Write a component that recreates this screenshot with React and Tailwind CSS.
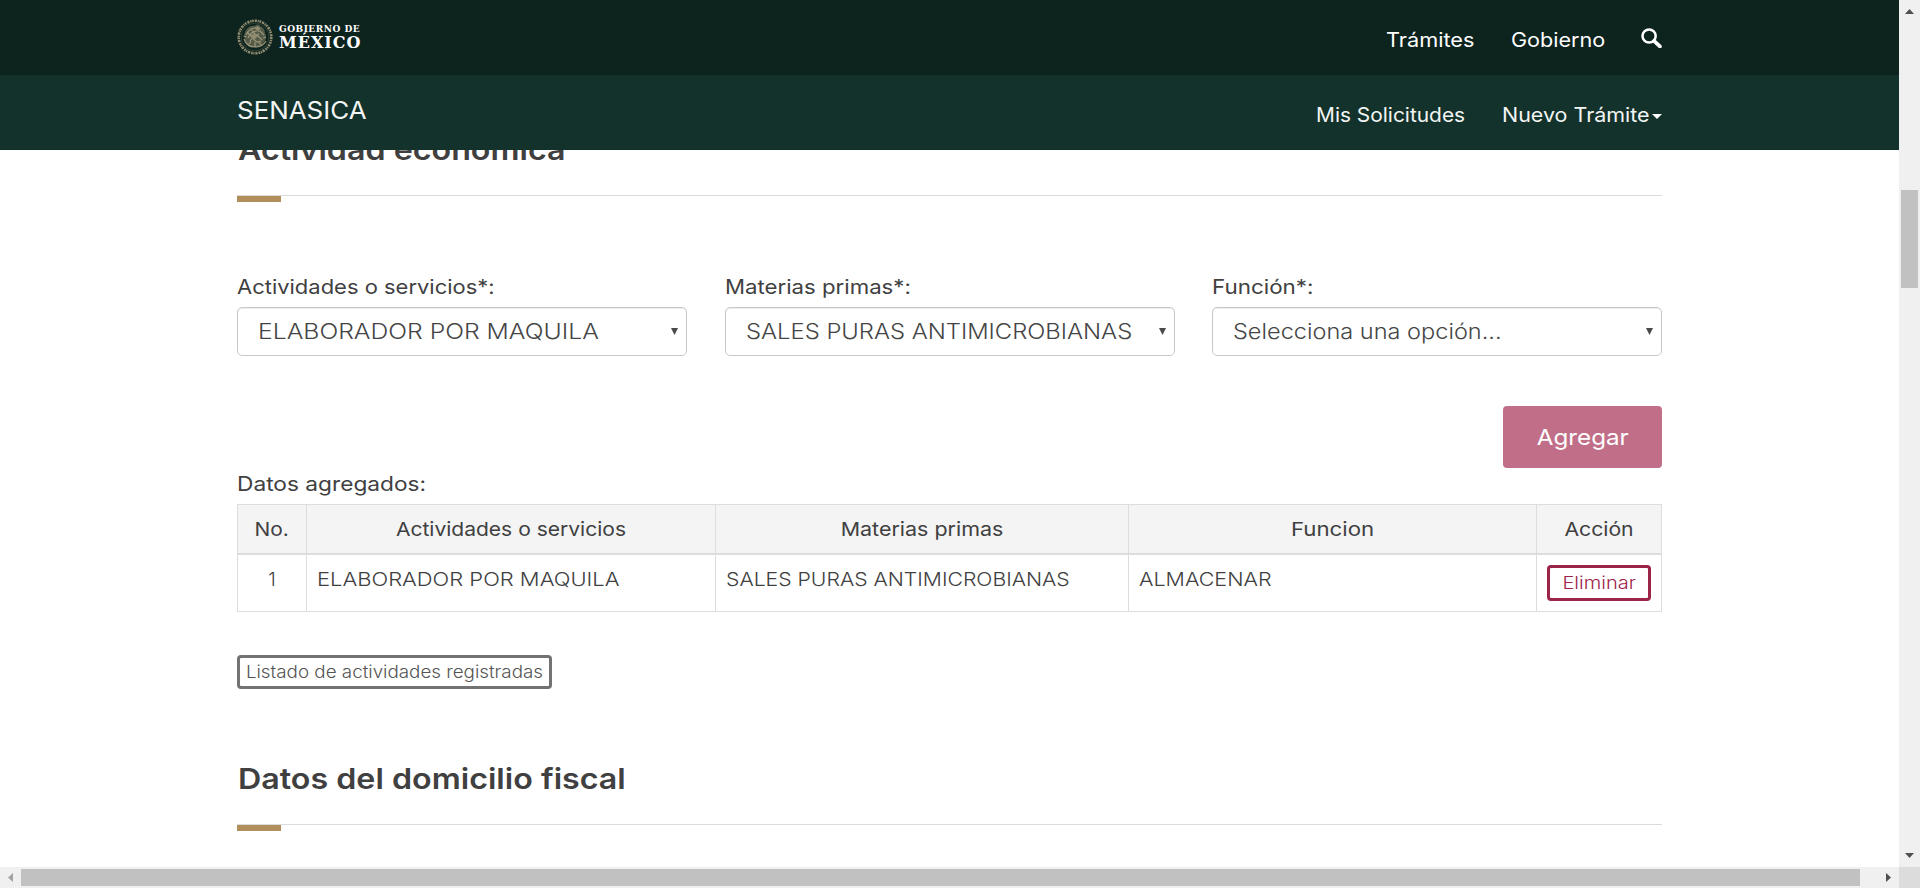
import React from 'react';

function Seal() {
  return (
    <svg className="h-9 w-9 shrink-0" viewBox="0 0 36 36" fill="none">
      <circle cx="18" cy="18" r="16.3" stroke="#8f8b70" strokeWidth="2.6" strokeDasharray="2.3 0.8 1.2 0.6 1.7 1" />
      <circle cx="18" cy="18" r="13.9" stroke="#3c4738" strokeWidth="0.8" />
      <path
        d="M8 13c2-5 6-7 10-6 1-2 4-2 5 0 3 1 5 4 5 7 2 3 1 7-1 9-2 4-6 6-10 5-4 0-8-3-9-7-1-3-1-5 0-8z"
        fill="#535a48"
      />
      <path
        d="M9 16c2-4 5-7 9-7M11 19c2-4 5-7 9-7M13 22c2-4 5-6 9-7M10 13l4 4M14 10l4 5M19 8l3 5M20 16l5 5M23 12l4 4M16 20l4 3 4-1M7 20c2 6 6 8 11 8s9-2 11-6M12 25l2-3M18 28v-5M24 26l-2-3M6.5 17l3 1M29 18l-3 1"
        stroke="#9b9678"
        strokeWidth="1.2"
      />
      <path d="M17 9l4-2 3 3-3 2zM13 17l5-3 3 3-4 4z" fill="#8f8b70" />
    </svg>
  );
}

function SearchIcon() {
  return (
    <svg className="-mt-[3px] h-5 w-[21px]" viewBox="0 0 21 20" fill="none" stroke="#fff">
      <circle cx="8.1" cy="8" r="6.6" strokeWidth="2.5" />
      <path d="M13 12.9l5.9 5.5" strokeWidth="3.7" strokeLinecap="round" />
    </svg>
  );
}

function Wide({ children, className }) {
  return <span className={`inline-block whitespace-nowrap ${className}`}>{children}</span>;
}

function Heading({ children }) {
  return (
    <div className="h-[83px]">
      <div className="flex h-[68px] items-center justify-start border-b border-[#d9dcdc]">
        <h3 className="-mt-[23px] pl-px text-[29px] leading-[40px] font-[560]">
          <Wide className="origin-left scale-x-[1.111]">{children}</Wide>
        </h3>
      </div>
      <div className="h-1.5 w-11 bg-[#b38e5d]" />
    </div>
  );
}

function Field({ label, labelClass, value, valueClass }) {
  return (
    <div className="w-[450px]">
      <div className="h-[32px] text-[20px] leading-[24px]">
        <Wide className={`origin-left ${labelClass}`}>{label}</Wide>
      </div>
      <div className="flex h-[49px] items-center justify-between rounded-[5px] border border-[#c8c8c8] bg-white pr-[8px] pl-5 shadow-[inset_0_1px_1px_rgba(0,0,0,0.075)]">
        <span className="-mt-[2px] text-[21.5px] leading-[30px] font-light text-[#454545]">
          <Wide className={`origin-left ${valueClass}`}>{value}</Wide>
        </span>
        <svg className="h-[7px] w-[7px]" viewBox="0 0 7 7">
          <path d="M0 0h7L3.5 7z" fill="#4a4a4a" />
        </svg>
      </div>
    </div>
  );
}

const columns = [
  { title: 'No.', className: 'scale-x-[1.1]' },
  { title: 'Actividades o servicios', className: 'scale-x-[1.107]' },
  { title: 'Materias primas', className: 'scale-x-[1.13]' },
  { title: 'Funcion', className: 'scale-x-[1.17]' },
  { title: 'Acción', className: 'scale-x-[1.115]' },
];

function DataTable() {
  return (
    <div className="grid h-[108px] grid-cols-[69px_409px_413px_408px_125px] grid-rows-[50px_57px] border-t border-l border-[#dddddd] text-[19px]">
      {columns.map((c) => (
        <div key={c.title} className="flex items-center justify-center border-r border-b-2 border-[#dddddd] bg-[#f4f4f4] pt-[2px]">
          <Wide className={c.className}>{c.title}</Wide>
        </div>
      ))}
      <div className="border-r border-b border-[#dddddd] pt-[13px] text-center leading-[24px] font-light">1</div>
      <div className="border-r border-b border-[#dddddd] pt-[13px] pl-[10px] leading-[24px] font-light">
        <Wide className="origin-left scale-x-[1.155]">ELABORADOR POR MAQUILA</Wide>
      </div>
      <div className="border-r border-b border-[#dddddd] pt-[13px] pl-[10px] leading-[24px] font-light">
        <Wide className="origin-left scale-x-[1.115]">SALES PURAS ANTIMICROBIANAS</Wide>
      </div>
      <div className="border-r border-b border-[#dddddd] pt-[13px] pl-[10px] leading-[24px] font-light">
        <Wide className="origin-left scale-x-[1.13]">ALMACENAR</Wide>
      </div>
      <div className="border-r border-b border-[#dddddd] pt-[10px] pl-[10px]">
        <button className="flex h-9 w-[104px] items-center justify-center rounded-[4px] border-3 border-[#9d2449] pt-[2px] text-[17px] font-light text-[#9d2449]">
          <Wide className="scale-x-[1.18]">Eliminar</Wide>
        </button>
      </div>
    </div>
  );
}

export default function App() {
  return (
    <div className="flex h-[888px] w-[1920px] flex-col overflow-hidden bg-white font-['Inter',sans-serif] text-[#404041]">
      <div className="flex h-[867px]">
        <div className="flex w-[1899px] flex-col overflow-hidden">
          <header className="z-10 shrink-0 text-white">
            <div className="flex h-[75px] justify-between bg-[#0c231e] pr-[237px] pl-[237px]">
              <div className="flex h-[73px] items-center gap-[6px]">
                <Seal />
                <div className="flex flex-col pt-[2px] font-['DejaVu_Serif',serif] font-bold">
                  <span className="h-[10px] text-[9px] leading-[10px] tracking-[0.5px] whitespace-nowrap">GOBIERNO DE</span>
                  <span className="h-[17px] text-[16px] leading-[17px] tracking-[1px]">MÉXICO</span>
                </div>
              </div>
              <nav className="flex items-center pt-1 text-[20px]">
                <a className="w-[125px]"><Wide className="origin-left scale-x-[1.085]">Trámites</Wide></a>
                <a className="w-[130px]"><Wide className="origin-left scale-x-[1.08]">Gobierno</Wide></a>
                <SearchIcon />
              </nav>
            </div>
            <div className="flex h-[75px] justify-between bg-[#13322b] pr-[237px] pl-[237px] text-[#f3f5f4]">
              <div className="pt-[21px] text-[24px] leading-[30px]">
                <Wide className="origin-left scale-x-[1.08]">SENASICA</Wide>
              </div>
              <nav className="flex items-center pt-1 text-[20px]">
                <a className="w-[186px]"><Wide className="origin-left scale-x-[1.045]">Mis Solicitudes</Wide></a>
                <a className="w-[150px]"><Wide className="origin-left scale-x-[1.073]">Nuevo Trámite</Wide></a>
                <svg className="mt-1 h-[5px] w-[10px]" viewBox="0 0 10 5">
                  <path d="M0 0h10L5 5z" fill="#fff" />
                </svg>
              </nav>
            </div>
          </header>

          <main className="-mt-[22px] w-[1662px] pl-[237px]">
            <Heading>Actividad económica</Heading>

            <section className="flex justify-between pt-[64px]">
              <Field label="Actividades o servicios*:" labelClass="scale-x-[1.098]" value="ELABORADOR POR MAQUILA" valueClass="scale-x-[1.15]" />
              <Field label="Materias primas*:" labelClass="scale-x-[1.11]" value="SALES PURAS ANTIMICROBIANAS" valueClass="scale-x-[1.107]" />
              <Field label="Función*:" labelClass="scale-x-[1.12]" value="Selecciona una opción..." valueClass="scale-x-[1.095]" />
            </section>

            <div className="flex justify-end pt-[50px]">
              <button className="h-[62px] w-[159px] rounded-[4px] bg-[#c16f88] text-[22px] text-white">
                <Wide className="scale-x-[1.1]">Agregar</Wide>
              </button>
            </div>

            <div className="h-[36px] pt-1 text-[20px] leading-[24px]">
              <Wide className="origin-left scale-x-[1.135]">Datos agregados:</Wide>
            </div>
            <DataTable />

            <button className="mt-[43px] flex h-[34px] w-[315px] items-center justify-center rounded-[4px] border-3 border-[#737373] pt-[2px] text-[17px] font-light text-[#545454]">
              <Wide className="scale-x-[1.105]">Listado de actividades registradas</Wide>
            </button>

            <div className="pt-[68px]">
              <Heading>Datos del domicilio fiscal</Heading>
            </div>
          </main>
        </div>

        <div className="flex w-[21px] flex-col items-center justify-between bg-[#f0f0f0] pt-[9px] pb-[9px]">
          <svg className="h-[5px] w-[9px]" viewBox="0 0 9 5"><path d="M0 5h9L4.5 0z" fill="#505050" /></svg>
          <div className="mt-[176px] mb-auto h-[98px] w-[17px] bg-[#c1c1c1]" />
          <svg className="h-[5px] w-[9px]" viewBox="0 0 9 5"><path d="M0 0h9L4.5 5z" fill="#505050" /></svg>
        </div>
      </div>
      <div className="flex h-[21px]">
        <div className="flex w-[1899px] items-center justify-between bg-[#f0f0f0] pr-[8px] pl-[8px]">
          <svg className="h-[9px] w-[5px]" viewBox="0 0 5 9"><path d="M5 0v9L0 4.5z" fill="#a3a3a3" /></svg>
          <div className="mr-auto ml-[8px] h-[17px] w-[1839px] bg-[#c1c1c1]" />
          <svg className="h-[9px] w-[5px]" viewBox="0 0 5 9"><path d="M0 0v9l5-4.5z" fill="#505050" /></svg>
        </div>
        <div className="w-[21px] bg-[#dcdcdc]" />
      </div>
    </div>
  );
}
